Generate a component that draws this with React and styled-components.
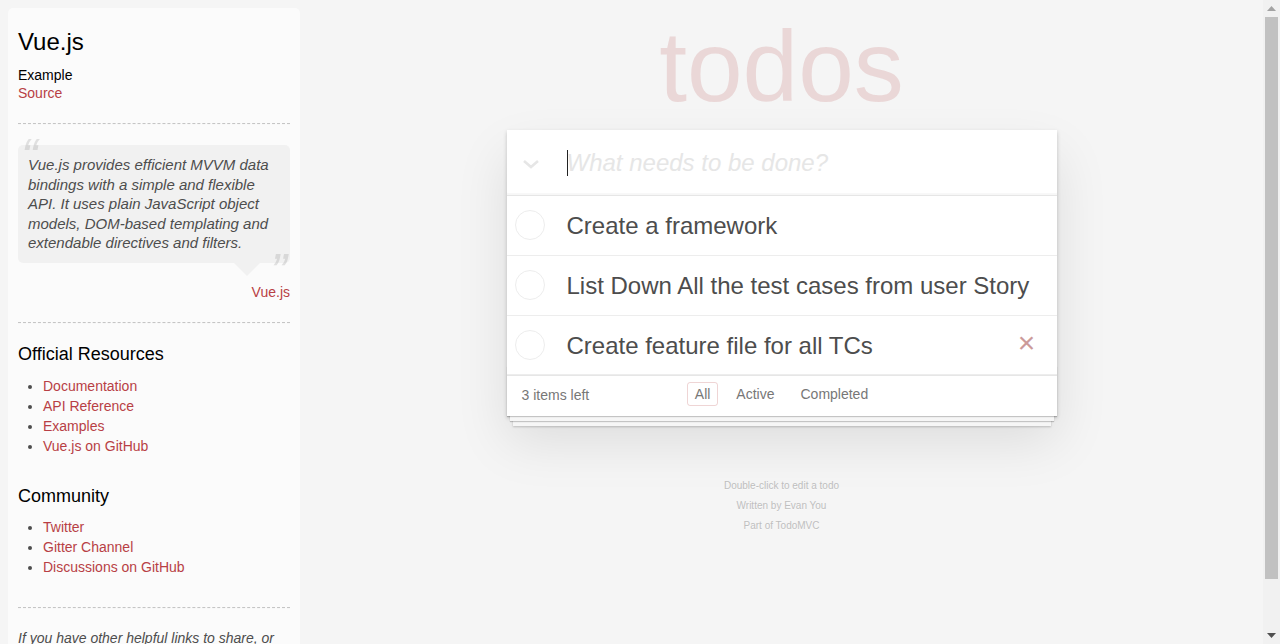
import React from 'react'
import styled, { createGlobalStyle } from 'styled-components'

const GlobalStyle = createGlobalStyle`
  html,
  body {
    margin: 0;
    padding: 0;
    overflow: hidden;
  }
  body {
    background: #f5f5f5;
    color: #4d4d4d;
    font: 14px 'Liberation Sans', Arial, sans-serif;
    line-height: 1.4em;
    font-weight: 300;
  }
`

const todos = [
  { id: 1, title: 'Create a framework' },
  { id: 2, title: 'List Down All the test cases from user Story' },
  { id: 3, title: 'Create feature file for all TCs', hovered: true },
]

const officialLinks = ['Documentation', 'API Reference', 'Examples', 'Vue.js on GitHub']
const communityLinks = ['Twitter', 'Gitter Channel', 'Discussions on GitHub']

function ChevronIcon() {
  return (
    <svg width="18" height="10" viewBox="0 0 18 10">
      <polyline points="2,2 9,8 16,2" fill="none" stroke="#e6e6e6" strokeWidth="2.6" />
    </svg>
  )
}

function ArrowIcon({ down, color }) {
  return (
    <svg width="9" height="5" viewBox="0 0 9 5">
      <polygon points={down ? '0,0 9,0 4.5,5' : '0,5 9,5 4.5,0'} fill={color} />
    </svg>
  )
}

function LinkList({ links }) {
  return (
    <List>
      {links.map((l) => (
        <ListItem key={l}>
          <Link href="#">{l}</Link>
        </ListItem>
      ))}
    </List>
  )
}

function Sidebar() {
  return (
    <Learn>
      <header>
        <H3>Vue.js</H3>
        <span>
          <H5>Example</H5>
          <Link href="#">Source</Link>
        </span>
      </header>
      <Rule />
      <Quote>
        <Bubble>
          <QuoteText>
            Vue.js provides efficient MVVM data bindings with a simple and flexible API. It uses
            plain JavaScript object models, DOM-based templating and extendable directives and
            filters.
          </QuoteText>
        </Bubble>
        <QuoteFooter>
          <Link href="#">Vue.js</Link>
        </QuoteFooter>
      </Quote>
      <Rule />
      <H4>Official Resources</H4>
      <LinkList links={officialLinks} />
      <H4>Community</H4>
      <LinkList links={communityLinks} />
      <footer>
        <Rule />
        <Note>
          If you have other helpful links to share, or find any of the links above no longer
          work, please <Link href="#">let us know</Link>.
        </Note>
      </footer>
    </Learn>
  )
}

function TodoItem({ todo }) {
  return (
    <Item>
      <Toggle />
      <ItemLabel>{todo.title}</ItemLabel>
      {todo.hovered && <Destroy>×</Destroy>}
    </Item>
  )
}

export default function App() {
  return (
    <>
      <GlobalStyle />
      <Screen>
        <Viewport>
          <Sidebar />
          <Main>
            <Column>
              <Title>todos</Title>
              <TodoApp>
                <NewTodoRow>
                  <ToggleAll>
                    <ChevronIcon />
                  </ToggleAll>
                  <Caret />
                  <NewTodo placeholder="What needs to be done?" />
                </NewTodoRow>
                <TodoList>
                  {todos.map((t) => (
                    <TodoItem key={t.id} todo={t} />
                  ))}
                </TodoList>
                <Footer>
                  <Count>
                    <strong>3</strong> items left
                  </Count>
                  <Filters>
                    <li>
                      <FilterLink href="#" $selected>
                        All
                      </FilterLink>
                    </li>
                    <li>
                      <FilterLink href="#">Active</FilterLink>
                    </li>
                    <li>
                      <FilterLink href="#">Completed</FilterLink>
                    </li>
                  </Filters>
                  <span />
                </Footer>
              </TodoApp>
              <Info>
                <p>Double-click to edit a todo</p>
                <p>Written by Evan You</p>
                <p>Part of TodoMVC</p>
              </Info>
            </Column>
          </Main>
        </Viewport>
        <Scrollbar>
          <ScrollButton>
            <ArrowIcon color="#a3a3a3" />
          </ScrollButton>
          <ScrollTrack>
            <ScrollThumb />
          </ScrollTrack>
          <ScrollButton>
            <ArrowIcon down color="#505050" />
          </ScrollButton>
        </Scrollbar>
      </Screen>
    </>
  )
}

const Screen = styled.div`
  display: flex;
  height: 100vh;
  overflow: hidden;
`

const Viewport = styled.div`
  flex: 1;
  min-width: 0;
  display: flex;
  align-items: flex-start;
`

const Scrollbar = styled.div`
  flex-shrink: 0;
  width: 17px;
  display: flex;
  flex-direction: column;
  background: #f1f1f1;
`

const ScrollButton = styled.div`
  height: 17px;
  display: flex;
  align-items: center;
  justify-content: center;
`

const ScrollTrack = styled.div`
  flex: 1;
  padding: 0 2px;
`

const ScrollThumb = styled.div`
  height: 562px;
  background: #c1c1c1;
`

const Learn = styled.aside`
  flex-shrink: 0;
  width: 272px;
  margin: 8px 0 0 8px;
  padding: 10px;
  border-radius: 5px;
  background: rgba(255, 255, 255, 0.6);
  color: #4d4d4d;
`

const H3 = styled.h3`
  margin: 10px 0;
  font-size: 24px;
  font-weight: 500;
  line-height: 1.2;
  color: #000;
`

const H4 = styled.h4`
  margin: 10px 0;
  font-size: 18px;
  font-weight: 500;
  line-height: 1.2;
  color: #000;
`

const H5 = styled.h5`
  margin: 10px 0 0;
  font-size: 14px;
  font-weight: 500;
  line-height: 1.2;
  color: #000;
`

const Link = styled.a`
  font-weight: normal;
  text-decoration: none;
  color: #b83f45;
`

const Rule = styled.hr`
  margin: 20px 0;
  border: 0;
  border-top: 1px dashed #c5c5c5;
  border-bottom: 1px dashed #f7f7f7;
`

const Quote = styled.blockquote`
  margin: 20px 0;
`

const Bubble = styled.div`
  position: relative;
  padding: 10px;
  border-radius: 5px;
  background: rgba(0, 0, 0, 0.04);

  &::after {
    content: '';
    position: absolute;
    top: 100%;
    right: 30px;
    border: 13px solid transparent;
    border-top-color: rgba(0, 0, 0, 0.04);
  }
`

const QuoteText = styled.p`
  margin: 0;
  font-size: 15px;
  font-style: italic;
  font-weight: 300;
  line-height: 1.3;

  &::before,
  &::after {
    font-size: 50px;
    opacity: 0.15;
    position: absolute;
  }
  &::before {
    content: '“';
    top: -20px;
    left: 3px;
  }
  &::after {
    content: '”';
    bottom: -42px;
    right: 3px;
  }
`

const QuoteFooter = styled.div`
  padding-top: 20px;
  text-align: right;
`

const List = styled.ul`
  padding: 0;
  margin: 0 0 30px 25px;
`

const ListItem = styled.li`
  line-height: 20px;
`

const Note = styled.em`
  display: block;
`

const Main = styled.main`
  flex: 1;
  display: flex;
  justify-content: center;
`

const Column = styled.div`
  width: 550px;
`

const Title = styled.h1`
  margin: 0;
  height: 130px;
  font-size: 100px;
  font-weight: 100;
  line-height: 133px;
  text-align: center;
  color: rgba(175, 47, 47, 0.15);
`

const TodoApp = styled.section`
  position: relative;
  background: #fff;
  margin-bottom: 40px;
  box-shadow: 0 2px 4px 0 rgba(0, 0, 0, 0.2), 0 25px 50px 0 rgba(0, 0, 0, 0.1);
`

const NewTodoRow = styled.header`
  display: flex;
  align-items: center;
  height: 65px;
  box-shadow: inset 0 -2px 1px rgba(0, 0, 0, 0.03);
`

const ToggleAll = styled.div`
  width: 48px;
  margin-right: 12px;
  display: flex;
  justify-content: center;
  padding-top: 2px;
`

const Caret = styled.span`
  width: 1px;
  height: 26px;
  margin-right: -1px;
  background: #222;
`

const NewTodo = styled.input`
  flex: 1;
  min-width: 0;
  padding: 0 16px 0 0;
  border: none;
  outline: none;
  background: transparent;
  font: inherit;
  font-size: 24px;
  line-height: 1.4em;
  color: #4d4d4d;

  &::placeholder {
    font-style: italic;
    font-weight: 300;
    color: #e6e6e6;
  }
`

const TodoList = styled.ul`
  margin: 0;
  padding: 0;
  list-style: none;
  border-top: 1px solid #e6e6e6;
`

const Item = styled.li`
  position: relative;
  display: flex;
  align-items: center;
  font-size: 24px;
  border-bottom: 1px solid #ededed;
`

const Toggle = styled.span`
  flex-shrink: 0;
  width: 30px;
  height: 30px;
  margin-left: 8px;
  box-sizing: border-box;
  border: 1px solid #ededed;
  border-radius: 50%;
`

const ItemLabel = styled.label`
  flex: 1;
  padding: 16px 15px 14px 22px;
  line-height: 1.2;
  word-break: break-all;
  color: #4d4d4d;
`

const Destroy = styled.button`
  position: absolute;
  top: 0;
  bottom: 4px;
  right: 10px;
  width: 40px;
  height: 40px;
  margin: auto 0;
  padding: 0;
  border: none;
  background: none;
  font: inherit;
  font-size: 30px;
  color: #cc9a9a;
`

const Footer = styled.footer`
  position: relative;
  display: grid;
  grid-template-columns: 1fr auto 1fr;
  height: 20px;
  padding: 10px 15px;
  color: #777;
  border-top: 1px solid #e6e6e6;

  &::before {
    content: '';
    position: absolute;
    right: 0;
    bottom: 0;
    left: 0;
    height: 50px;
    overflow: hidden;
    box-shadow: 0 1px 1px rgba(0, 0, 0, 0.2), 0 8px 0 -3px #f6f6f6,
      0 9px 1px -3px rgba(0, 0, 0, 0.2), 0 16px 0 -6px #f6f6f6,
      0 17px 2px -6px rgba(0, 0, 0, 0.2);
  }

  strong {
    font-weight: 300;
  }
`

const Count = styled.span`
  text-align: left;
  line-height: 18px;
`

const Filters = styled.ul`
  display: flex;
  gap: 4px;
  margin: -4px 0 0;
  padding: 0;
  list-style: none;
  align-self: flex-start;
`

const FilterLink = styled.a`
  display: block;
  margin: 0 3px;
  padding: 3px 7px;
  line-height: 16px;
  color: inherit;
  text-decoration: none;
  border: 1px solid ${({ $selected }) => ($selected ? 'rgba(175, 47, 47, 0.2)' : 'transparent')};
  border-radius: 3px;
`

const Info = styled.footer`
  margin-top: 65px;
  color: #bfbfbf;
  font-size: 10px;
  text-shadow: 0 1px 0 rgba(255, 255, 255, 0.5);
  text-align: center;

  p {
    margin: 10px 0;
    line-height: 1;
  }
`
